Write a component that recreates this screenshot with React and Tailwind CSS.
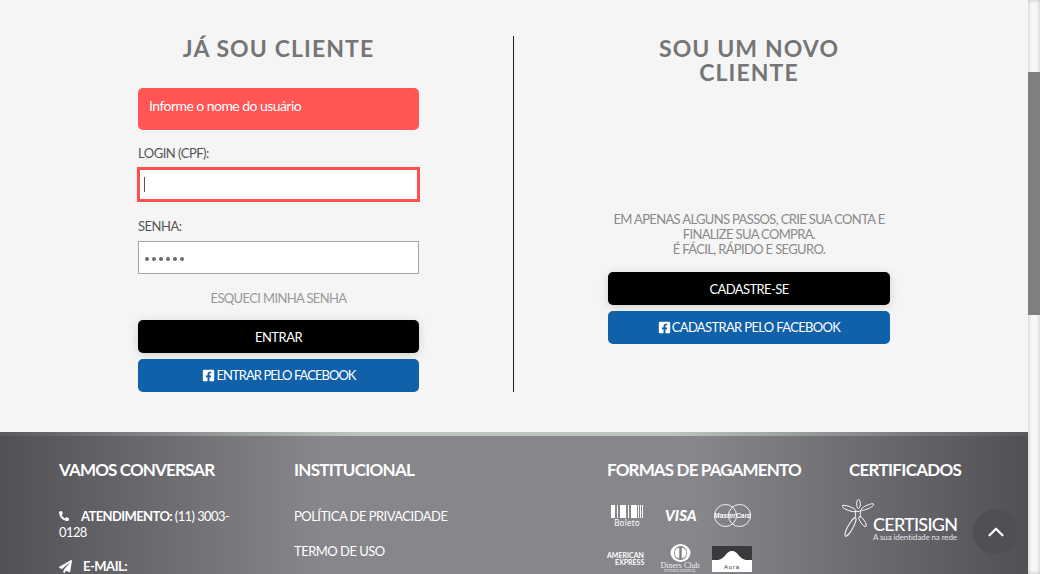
import { FaFacebookSquare, FaPhoneAlt, FaPaperPlane } from "react-icons/fa";
import { ChevronUp } from "lucide-react";

function Boleto() {
  const bars = [4, 2, 1, 2, 6, 2, 1, 2, 6, 1, 1, 1, 1, 1, 1];
  let x = 0;
  return (
    <div className="flex flex-col items-center w-[32px]">
      <svg width="32" height="13" viewBox="0 0 32 13">
        {bars.map((w, i) => {
          const r = i % 2 === 0 ? <rect key={i} x={x} width={w} height="13" fill="#fff" /> : null;
          x += w;
          return r;
        })}
      </svg>
      <span className="text-[8px] leading-[9px] text-white font-['Noto_Sans',sans-serif] tracking-wide">Boleto</span>
    </div>
  );
}

function Mastercard() {
  return (
    <svg width="37" height="23" viewBox="0 0 37 23" fill="none" stroke="#fff" strokeWidth="0.9">
      <circle cx="11.5" cy="11.5" r="11" />
      <circle cx="25.5" cy="11.5" r="11" />
      <text x="18.5" y="14" textAnchor="middle" fontSize="6.8" fontStyle="italic" fontWeight="700" fill="#fff" stroke="none" fontFamily="Liberation Sans">MasterCard</text>
    </svg>
  );
}

function Diners() {
  return (
    <div className="flex flex-col items-center w-[36px]">
      <svg width="21" height="18" viewBox="0 0 21 18">
        <ellipse cx="10.5" cy="9" rx="10" ry="9" fill="#fff" />
        <ellipse cx="10.5" cy="9" rx="6.5" ry="7" fill="#7d7c81" />
        <path d="M9.3 3.5v11a5.6 5.6 0 010-11zM11.7 3.5a5.6 5.6 0 010 11z" fill="#fff" />
      </svg>
      <span className="text-[8px] leading-[7px] text-[#eee] font-['Liberation_Serif',serif] whitespace-nowrap">Diners Club</span>
      <span className="text-[4px] leading-[4px] text-[#eee] font-['Liberation_Serif',serif] whitespace-nowrap">INTERNATIONAL</span>
    </div>
  );
}

function Aura() {
  return (
    <svg width="40" height="26" viewBox="0 0 40 26">
      <rect width="40" height="26" fill="#fff" />
      <rect width="40" height="14" fill="#3a3a3c" />
      <path d="M6 14c7-1 8-9 14-9s7 8 14 9z" fill="#fff" />
      <text x="20" y="22.5" textAnchor="middle" fontSize="6" letterSpacing="0.8" fill="#333" fontFamily="Liberation Sans">Aura</text>
    </svg>
  );
}

function CertisignLogo() {
  return (
    <div className="flex items-start -ml-[2px]">
      <svg width="32" height="40" viewBox="0 0 32 40" fill="none" stroke="#fff" strokeWidth="0.9" className="shrink-0">
        <ellipse cx="16.5" cy="5" rx="1.9" ry="4.5" />
        <ellipse cx="7" cy="9.5" rx="7.5" ry="2" transform="rotate(20 7 9.5)" />
        <ellipse cx="25.5" cy="8" rx="6.5" ry="1.7" transform="rotate(-25 25.5 8)" />
        <ellipse cx="8.5" cy="28" rx="2.5" ry="10.5" transform="rotate(29 8.5 28)" />
        <ellipse cx="20.5" cy="22.5" rx="2" ry="6" transform="rotate(-35 20.5 22.5)" />
        <path d="M13 12c2 1 4 1 6-1M13 12c1 3 1 5-1 8M19 11c-1 3-1 5 0 7" />
      </svg>
      <div className="flex flex-col mt-[16px] -ml-[1px]">
        <span className="text-[18px] leading-[18px] text-white font-medium tracking-[-0.75px]">CERTISIGN</span>
        <span className="text-[8px] leading-[8px] text-[#e4e4e4] tracking-[-0.1px] whitespace-nowrap">A sua identidade na rede</span>
      </div>
    </div>
  );
}

export default function App() {
  return (
    <div className="h-[574px] w-[1040px] overflow-hidden flex bg-[#f5f5f5] font-['Lato',sans-serif] relative">
      <div className="w-[1028px] shrink-0 flex flex-col">
        {/* LOGIN AREA */}
        <div className="h-[432px] shrink-0 flex pt-[36px]">
          <div className="w-[514px] shrink-0 h-[356px] border-r border-[#222] pl-[138px] pr-[94px]">
            <h2 className="text-[23px] leading-[24px] font-bold tracking-[1.1px] text-[#757575] text-center mb-[28px]">JÁ SOU CLIENTE</h2>
            <div className="h-[42px] rounded-[5px] bg-[#ff5555] text-white text-[14px] tracking-[-0.55px] leading-[36px] px-[11px]">Informe o nome do usuário</div>
            <div className="text-[13px] tracking-[-0.5px] leading-[16px] text-[#555] mt-[15px]">LOGIN (CPF):</div>
            <div className="h-[35px] mt-[6px] border-[3px] border-[#ff4f4f] -mx-[1px] bg-white flex items-center pl-[4px]">
              <div className="w-px h-[15px] bg-[#555]" />
            </div>
            <div className="text-[13px] tracking-[-0.5px] leading-[16px] text-[#555] mt-[16px]">SENHA:</div>
            <div className="h-[33px] mt-[7px] border border-[#a5a5a5] bg-white flex items-center pl-[6px] gap-[3px]">
              {[0, 1, 2, 3, 4, 5].map((i) => (
                <span key={i} className="w-[4px] h-[4px] rounded-full bg-[#6b6b6b] translate-y-[1px]" />
              ))}
            </div>
            <div className="text-[13px] tracking-[-0.63px] leading-[16px] text-[#999] text-center mt-[16px]">ESQUECI MINHA SENHA</div>
            <button className="block w-full h-[33px] pt-[2px] mt-[14px] rounded-[5px] bg-black text-white text-[13px] tracking-[-0.5px] shadow-[0_2px_10px_rgba(0,0,0,0.15)]">ENTRAR</button>
            <button className="flex items-center justify-center gap-[2px] w-full h-[33px] mt-[6px] rounded-[5px] bg-[#1160aa] text-white text-[13px] tracking-[-0.95px]">
              <FaFacebookSquare className="text-[13px]" />
              ENTRAR PELO FACEBOOK
            </button>
          </div>
          <div className="w-[282px] ml-[94px] shrink-0">
            <h2 className="text-[23px] leading-[24px] font-bold tracking-[1.1px] text-[#757575] text-center">SOU UM NOVO<br />CLIENTE</h2>
            <p className="text-[13px] tracking-[-0.65px] leading-[15px] text-[#8a8a8a] text-center mt-[128px]">
              EM APENAS ALGUNS PASSOS, CRIE SUA CONTA E FINALIZE SUA COMPRA.<br />É FÁCIL, RÁPIDO E SEGURO.
            </p>
            <button className="block w-full h-[33px] pt-[2px] mt-[15px] rounded-[5px] bg-black text-white text-[13px] tracking-[-0.6px] shadow-[0_2px_10px_rgba(0,0,0,0.15)]">CADASTRE-SE</button>
            <button className="flex items-center justify-center gap-[1px] w-full h-[33px] mt-[6px] rounded-[5px] bg-[#1160aa] text-white text-[13px] tracking-[-0.65px]">
              <FaFacebookSquare className="text-[13px]" />
              CADASTRAR PELO FACEBOOK
            </button>
          </div>
        </div>
        {/* FOOTER */}
        <div className="h-[4px] shrink-0 bg-[linear-gradient(90deg,#59585d_0%,#bcc5c0_35%,#bcc5c0_65%,#59585d_100%)]" />
        <div className="flex-1 flex bg-[linear-gradient(90deg,#505055_0%,#87868b_31%,#87868b_68%,#505055_100%)] text-white pt-[22px] pl-[59px]">
          <div className="w-[235px] shrink-0">
            <h3 className="text-[17px] leading-[24px] font-bold tracking-[-0.85px]">VAMOS CONVERSAR</h3>
            <p className="w-[175px] text-[13px] tracking-[-0.6px] leading-[16px] mt-[26px]">
              <FaPhoneAlt className="inline text-[10px] mr-[12px] -mt-[3px]" />
              <b>ATENDIMENTO:</b> (11) 3003-0128
            </p>
            <p className="text-[13px] tracking-[-0.5px] leading-[16px] mt-[18px]">
              <FaPaperPlane className="inline text-[13px] mr-[11px] -mt-[3px]" />
              <b>E-MAIL:</b>
            </p>
          </div>
          <div className="w-[313px] shrink-0">
            <h3 className="text-[17px] leading-[24px] font-bold tracking-[-0.7px]">INSTITUCIONAL</h3>
            <div className="text-[13px] tracking-[-0.52px] leading-[15px] mt-[27px]">POLÍTICA DE PRIVACIDADE</div>
            <div className="text-[13px] tracking-[-0.52px] leading-[15px] mt-[20px]">TERMO DE USO</div>
          </div>
          <div className="w-[237px] shrink-0">
            <h3 className="text-[17px] leading-[24px] font-bold tracking-[-0.85px]">FORMAS DE PAGAMENTO</h3>
            <div className="grid grid-cols-[55px_50px_40px] items-center mt-[22px] gap-y-[17px]">
              <div className="pl-[4px]"><Boleto /></div>
              <div className="pl-[3px] italic font-black text-[15px] leading-[15px]">VISA</div>
              <div className="pl-[2px]"><Mastercard /></div>
              <div className="text-[7px] leading-[7px] font-bold whitespace-nowrap">AMERICAN<br /><span className="pl-[8px]">EXPRESS</span></div>
              <Diners />
              <Aura />
            </div>
          </div>
          <div className="flex-1">
            <h3 className="text-[17px] leading-[24px] font-bold tracking-[-0.7px] pl-[5px]">CERTIFICADOS</h3>
            <div className="mt-[17px]"><CertisignLogo /></div>
          </div>
        </div>
      </div>
      {/* SCROLLBAR */}
      <div className="w-[12px] shrink-0 h-full bg-[#f8f8f8] shadow-[inset_0_0_4px_rgba(0,0,0,0.25)]">
        <div className="h-[243px] mt-[72px] bg-[#808080]" />
      </div>
      <button className="absolute left-[973px] top-[509px] w-[45px] h-[45px] rounded-full bg-[#505054] flex items-center justify-center text-white">
        <ChevronUp size={26} strokeWidth={2} />
      </button>
    </div>
  );
}
